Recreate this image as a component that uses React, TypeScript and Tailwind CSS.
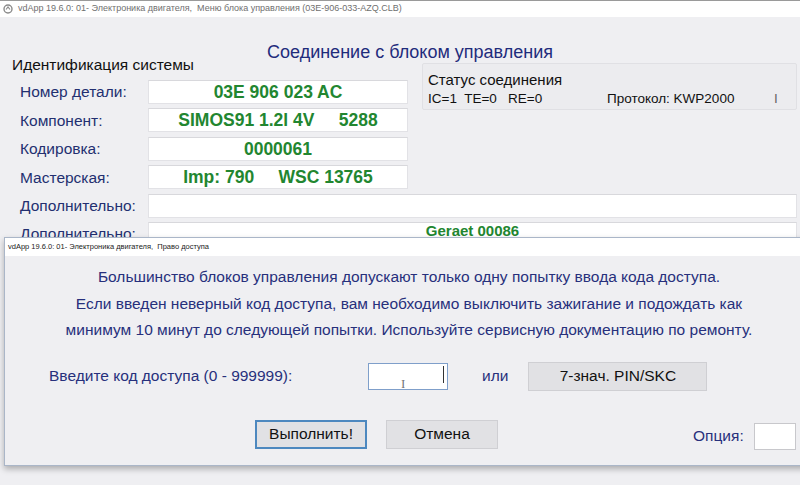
import React from 'react';

const font = { fontFamily: '"Liberation Sans", Arial, sans-serif' };

const idRows = [
  { label: 'Номер детали:', value: '03E 906 023 AC' },
  { label: 'Компонент:', value: 'SIMOS91 1.2l 4V     5288' },
  { label: 'Кодировка:', value: '0000061' },
  { label: 'Мастерская:', value: 'Imp: 790     WSC 13765' },
];

function AppIcon() {
  return (
    <svg width="10" height="10" viewBox="0 0 10 10" className="shrink-0">
      <circle cx="5" cy="5" r="4" fill="none" stroke="#8a8a8a" strokeWidth="1.4" />
      <path d="M3 5.5 L5 3 L7 5.5" fill="none" stroke="#8a8a8a" strokeWidth="1.2" />
    </svg>
  );
}

function ValueBox({ value, wide }: { value: string; wide?: boolean }) {
  return (
    <div
      className={`flex h-[24px] items-center justify-center border border-[#e2e2e6] border-t-[#d8d8dc] bg-white font-bold whitespace-pre text-[#228630] ${
        wide ? 'w-[649px] pb-[6px] text-[15px]' : 'w-[260px] text-[17.5px]'
      }`}
    >
      {value}
    </div>
  );
}

export default function App() {
  return (
    <div className="relative h-[485px] w-[800px] overflow-hidden bg-[#efeff2]" style={font}>
      {/* main window */}
      <div className="flex h-[17px] items-center gap-[5px] border-t border-[#9a9a9a] bg-white pl-[3px] text-[9px] text-[#6f6f6f]">
        <AppIcon />
        <span className="whitespace-pre">vdApp 19.6.0: 01- Электроника двигателя,  Меню блока управления (03E-906-033-AZQ.CLB)</span>
      </div>

      <div className="mt-[24px] text-center text-[18px] leading-[22px] text-[#1f2c7c]">
        <span className="pl-[20px]">Соединение с блоком управления</span>
      </div>

      <div className="-mt-[6px] flex">
        <div className="w-[408px] pl-[12px]">
          <div className="h-[16px] text-[15.5px] leading-[16px] text-[#111]">Идентификация системы</div>
          <div className="mt-[7px] flex flex-col gap-[4.4px]">
            {idRows.map((r) => (
              <div key={r.label} className="flex items-center">
                <div className="w-[136px] pl-[8px] text-[15.5px] text-[#232f70]">{r.label}</div>
                <ValueBox value={r.value} />
              </div>
            ))}
          </div>
        </div>
        <div className="mt-[6px] ml-[14px] h-[47px] w-[375px] rounded-[2px] border border-[#e0e0e4] bg-[#ececef] pl-[5px] pt-[8px] text-[#111]">
          <div className="text-[15px] leading-[15px]">Статус соединения</div>
          <div className="mt-[4px] flex text-[13.5px] leading-[16px]">
            <span className="w-[179px] whitespace-pre">IC=1  TE=0   RE=0</span>
            <span className="w-[167px]">Протокол: KWP2000</span>
            <span className="text-[#666]">I</span>
          </div>
        </div>
      </div>

      <div className="mt-[4.4px] flex flex-col gap-[4.4px] pl-[12px]">
        {['', 'Geraet 00086'].map((v, i) => (
          <div key={i} className="flex items-center">
            <div className="w-[136px] pl-[8px] text-[15.5px] text-[#232f70]">Дополнительно:</div>
            <ValueBox value={v} wide />
          </div>
        ))}
      </div>

      {/* access dialog */}
      <div className="absolute left-[4px] top-[237px] h-[229px] w-[810px] border border-[#aab6c8] bg-[#efeff2] shadow-[0_3px_6px_rgba(0,0,0,0.28)]">
        <div className="flex h-[18px] items-center bg-white pl-[3px] text-[7.5px] whitespace-pre text-[#222]">
          vdApp 19.6.0: 01- Электроника двигателя,  Право доступа
        </div>
        <div className="pt-[8px] text-center text-[15.5px] leading-[26.5px] text-[#27307c]">
          <div>Большинство блоков управления допускают только одну попытку ввода кода доступа.</div>
          <div>Если введен неверный код доступа, вам необходимо выключить зажигание и подождать как</div>
          <div>минимум 10 минут до следующей попытки. Используйте сервисную документацию по ремонту.</div>
        </div>

        <div className="mt-[18px] flex items-center pl-[44px]">
          <div className="w-[319px] text-[15.5px] text-[#27307c]">Введите код доступа (0 - 999999):</div>
          <div className="relative h-[27px] w-[80px] border border-[#7f9fca] bg-white">
            <span
              className="absolute left-[32px] top-[13px] text-[13px] leading-[13px] text-[#777]"
              style={{ fontFamily: '"Liberation Serif", serif' }}
            >
              I
            </span>
            <span className="absolute left-[74px] top-[2px] h-[17px] w-[1px] bg-[#333]" />
          </div>
          <div className="ml-[34px] text-[15.5px] text-[#27307c]">или</div>
          <button
            type="button"
            className="ml-[20px] h-[29px] w-[179px] border border-[#cfcfd3] bg-[#e1e1e4] text-[15.5px] text-[#111]"
          >
            7-знач. PIN/SKC
          </button>
        </div>

        <div className="mt-[28px] flex items-center pl-[250px]">
          <button
            type="button"
            className="h-[29px] w-[112px] border-2 border-[#4d88bf] bg-[#e1e1e4] text-[15.5px] text-[#111]"
          >
            Выполнить!
          </button>
          <button
            type="button"
            className="ml-[19px] h-[29px] w-[112px] border border-[#cfcfd3] bg-[#e1e1e4] text-[15.5px] text-[#111]"
          >
            Отмена
          </button>
          <div className="ml-[195px] mt-[4px] flex items-center">
            <span className="w-[61px] text-[15.5px] text-[#27307c]">Опция:</span>
            <div className="h-[27px] w-[42px] border border-[#c8c8cc] bg-white" />
          </div>
        </div>
      </div>
    </div>
  );
}
